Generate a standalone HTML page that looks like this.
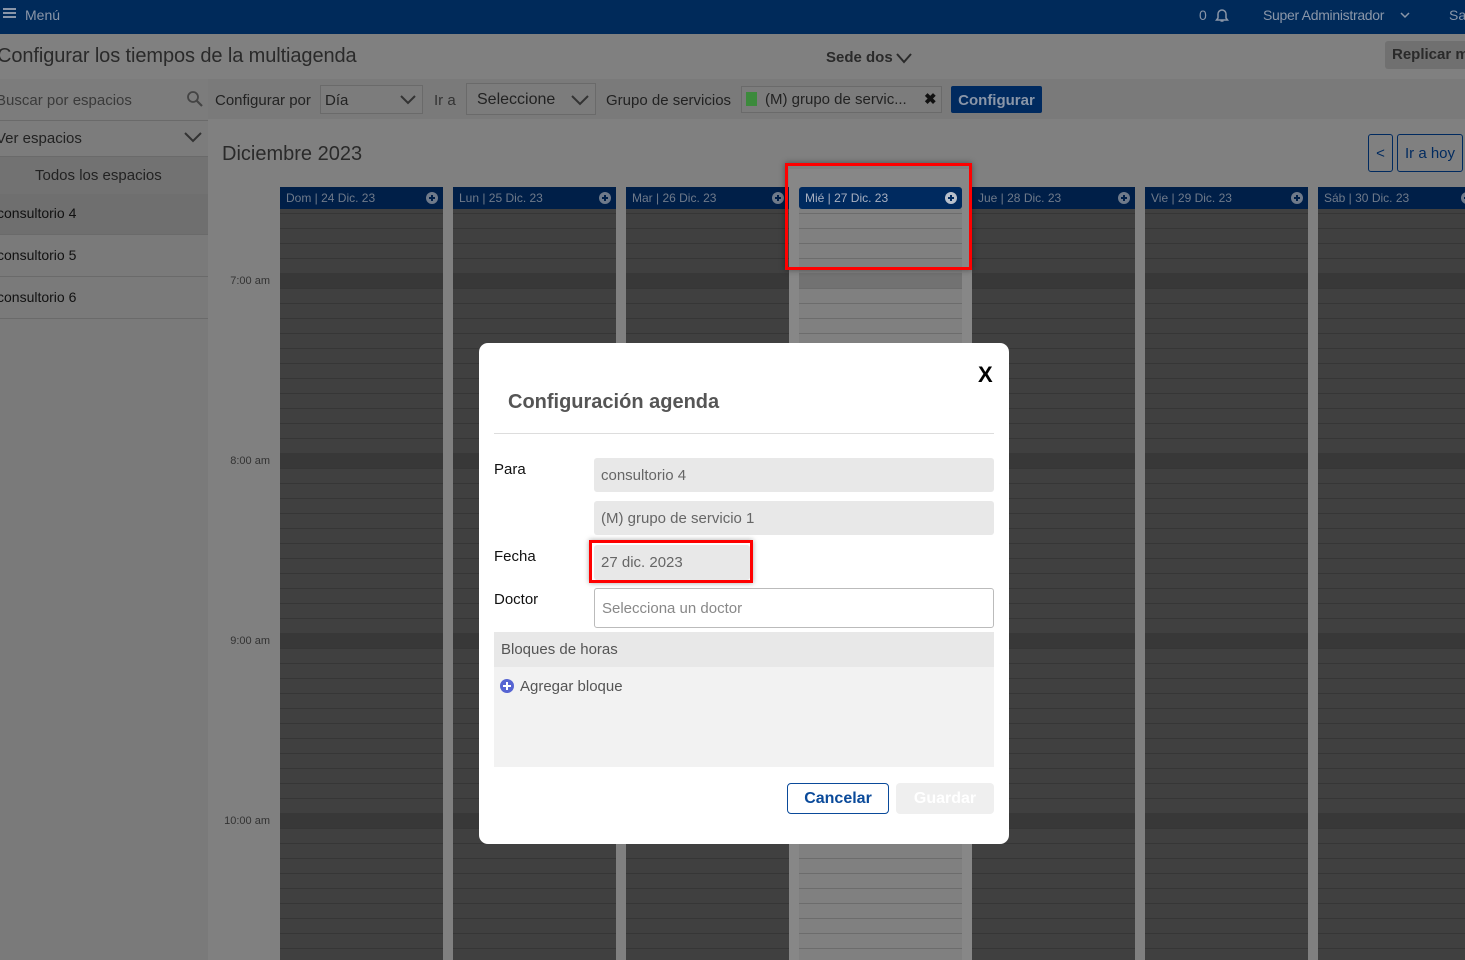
<!DOCTYPE html>
<html><head><meta charset="utf-8"><style>
*{box-sizing:border-box;margin:0;padding:0}
body{width:1465px;height:960px;overflow:hidden;background:#808080;font-family:"Liberation Sans",Arial,sans-serif;position:relative}
.a{position:absolute}
.top{left:0;top:0;width:1465px;height:34px;background:#002a5a;color:#8a96a8;font-size:14px}
.col{position:absolute;top:187px;width:163px;height:773px}
.col .h{height:22px;background:#001f48;color:#6f7a8a;font-size:12px;line-height:22px;padding-left:6px;position:relative}
.col .h i{position:absolute;right:5px;top:5px;width:12px;height:12px;border-radius:50%;background:#6f7a8a}
.col .h i:before{content:"";position:absolute;left:3px;top:5px;width:6px;height:2px;background:#001f48}
.col .h i:after{content:"";position:absolute;left:5px;top:3px;width:2px;height:6px;background:#001f48}
.col .b{height:751px;background:
repeating-linear-gradient(to bottom,transparent 0 64px,#383838 64px 79px,transparent 79px 180px),
repeating-linear-gradient(to bottom,transparent 0 4px,#363636 4px 5px,transparent 5px 15px),#404040}
.w .h{background:#002a5f;color:#a8b0c0;border-radius:3px}
.w .h i{background:#b8c0cc}.w .h i:before,.w .h i:after{background:#002a5f}
.w .b{background:
repeating-linear-gradient(to bottom,transparent 0 64px,#727272 64px 79px,transparent 79px 180px),
repeating-linear-gradient(to bottom,transparent 0 4px,#6c6c6c 4px 5px,transparent 5px 15px),#808080}
.tl{position:absolute;right:1195px;font-size:11px;color:#333}
.side{left:0;top:79px;width:208px;height:881px;background:#7a7a7a}
.item{position:absolute;left:0;width:208px;height:42px;border-bottom:1px solid #6a6a6a;font-size:14px;color:#111;line-height:40px;text-indent:-3px}
.modal{left:479px;top:343px;width:530px;height:501px;background:#fff;border-radius:9px}
.lbl{position:absolute;font-size:15px;color:#111}
.inp{position:absolute;left:115px;width:400px;height:34px;background:#e8e8e8;border-radius:3px;font-size:15px;color:#666;line-height:35px;padding-left:7px}
</style></head><body>
<div class="a top">
 <div class="a" style="left:3px;top:8px;width:13px;height:2px;background:#8a96a8;box-shadow:0 4px 0 #8a96a8,0 8px 0 #8a96a8"></div>
 <div class="a" style="left:25px;top:7px">Menú</div>
 <div class="a" style="left:1199px;top:7px">0</div>
 <svg class="a" style="left:1215px;top:7px" width="14" height="16" viewBox="0 0 14 16"><path d="M3 11V7a4 4 0 0 1 8 0v4l1.5 2h-11z M5.5 14h3" fill="none" stroke="#8a96a8" stroke-width="1.5"/></svg>
 <div class="a" style="left:1263px;top:7px;letter-spacing:-.3px">Super Administrador</div>
 <svg class="a" style="left:1400px;top:11px" width="10" height="8"><path d="M1 2l4 4 4-4" fill="none" stroke="#8a96a8" stroke-width="1.5"/></svg>
 <div class="a" style="left:1449px;top:7px">Sa</div>
</div>
<div class="a" style="left:-3px;top:45px;font-size:20px;color:#2a2a2a;letter-spacing:-.1px">Configurar los tiempos de la multiagenda</div>
<div class="a" style="left:826px;top:49px;font-size:15px;font-weight:bold;color:#2a2a2a">Sede dos</div>
<svg class="a" style="left:896px;top:52px" width="16" height="12"><path d="M1 2l7 8 7-8" fill="none" stroke="#2a2a2a" stroke-width="2"/></svg>
<div class="a" style="left:1385px;top:41px;width:90px;height:28px;background:#707070;border-radius:3px;font-size:15px;font-weight:bold;color:#2a2a2a;line-height:28px;padding-left:7px">Replicar m</div>
<div class="a" style="left:208px;top:79px;width:1257px;height:40px;background:#7a7a7a"></div>
<div class="a side"></div>
<div class="a" style="left:0;top:79px;width:208px;height:42px;border-bottom:1px solid #6a6a6a;background:#7c7c7c;font-size:15px;color:#3a3a3a;line-height:44px;text-indent:-4px">Buscar por espacios</div>
<svg class="a" style="left:186px;top:90px" width="18" height="18"><circle cx="7" cy="7" r="5" fill="none" stroke="#444" stroke-width="1.8"/><path d="M11 11l5 5" stroke="#444" stroke-width="2.2"/></svg>
<div class="a" style="left:0;top:121px;width:208px;height:36px;background:#7c7c7c;border-bottom:1px solid #6a6a6a;font-size:15px;color:#222;line-height:36px;text-indent:-4px">Ver espacios</div>
<svg class="a" style="left:184px;top:131px" width="18" height="12"><path d="M1 2l8 8 8-8" fill="none" stroke="#333" stroke-width="2"/></svg>
<div class="a" style="left:0;top:157px;width:208px;height:37px;background:#727272;font-size:15px;color:#222;line-height:38px;padding-left:35px">Todos los espacios</div>
<div class="item" style="top:194px;background:#6f6f6f;height:41px;line-height:38px">consultorio 4</div>
<div class="item" style="top:235px">consultorio 5</div>
<div class="item" style="top:277px">consultorio 6</div>
<div class="a" style="left:215px;top:92px;font-size:15px;color:#222">Configurar por</div>
<div class="a" style="left:320px;top:85px;width:103px;height:29px;background:#7c7c7c;border:1px solid #6a6a6a;font-size:15px;color:#222;line-height:29px;padding-left:4px">Día</div>
<svg class="a" style="left:400px;top:95px" width="16" height="11"><path d="M1 1l7 7 7-7" fill="none" stroke="#333" stroke-width="2"/></svg>
<div class="a" style="left:434px;top:92px;font-size:15px;color:#333">Ir a</div>
<div class="a" style="left:466px;top:83px;width:130px;height:32px;background:#7c7c7c;border:1px solid #6a6a6a;font-size:16px;color:#222;line-height:32px;padding-left:10px">Seleccione</div>
<svg class="a" style="left:571px;top:95px" width="18" height="11"><path d="M1 1l8 8 8-8" fill="none" stroke="#333" stroke-width="2"/></svg>
<div class="a" style="left:606px;top:92px;font-size:15px;color:#222">Grupo de servicios</div>
<div class="a" style="left:741px;top:86px;width:201px;height:27px;background:#7c7c7c;border:1px solid #6a6a6a"></div>
<div class="a" style="left:746px;top:92px;width:11px;height:14px;background:#3c8a3c"></div>
<div class="a" style="left:765px;top:91px;font-size:15px;color:#222">(M) grupo de servic...</div>
<div class="a" style="left:924px;top:90px;font-size:15px;font-weight:bold;color:#111">✖</div>
<div class="a" style="left:951px;top:86px;width:91px;height:27px;background:#002a5f;border-radius:2px;color:#8a96a8;font-weight:bold;font-size:15px;line-height:29px;text-align:center">Configurar</div>
<div class="a" style="left:222px;top:143px;font-size:20px;color:#2a2a2a">Diciembre 2023</div>
<div class="a" style="left:1368px;top:134px;width:25px;height:38px;border:1px solid #002a5f;border-radius:3px;color:#002a5f;font-size:15px;line-height:38px;text-align:center">&lt;</div>
<div class="a" style="left:1397px;top:134px;width:66px;height:38px;border:1px solid #002a5f;border-radius:3px;color:#002a5f;font-size:15px;line-height:38px;text-align:center">Ir a hoy</div>
<div class="tl" style="top:275px">7:00 am</div>
<div class="tl" style="top:455px">8:00 am</div>
<div class="tl" style="top:635px">9:00 am</div>
<div class="tl" style="top:815px">10:00 am</div>
<div class="col" style="left:280px"><div class="h">Dom | 24 Dic. 23<i></i></div><div class="b"></div></div>
<div class="col" style="left:453px"><div class="h">Lun | 25 Dic. 23<i></i></div><div class="b"></div></div>
<div class="col" style="left:626px"><div class="h">Mar | 26 Dic. 23<i></i></div><div class="b"></div></div>
<div class="a" style="left:789px;top:169px;width:183px;height:791px;background:#878787"></div>
<div class="col w" style="left:799px"><div class="h">Mié | 27 Dic. 23<i></i></div><div class="b"></div></div>
<div class="col" style="left:972px"><div class="h">Jue | 28 Dic. 23<i></i></div><div class="b"></div></div>
<div class="col" style="left:1145px"><div class="h">Vie | 29 Dic. 23<i></i></div><div class="b"></div></div>
<div class="col" style="left:1318px;width:160px"><div class="h">Sáb | 30 Dic. 23<i></i></div><div class="b"></div></div>
<div class="a" style="left:785px;top:163px;width:187px;height:107px;border:3px solid #ff0000;box-shadow:0 0 6px rgba(0,0,0,.4)"></div>
<div class="a modal">
 <div class="a" style="left:499px;top:19px;font-size:22px;font-weight:bold;color:#000">X</div>
 <div class="a" style="left:29px;top:48px;font-size:20px;font-weight:bold;color:#555">Configuración agenda</div>
 <div class="a" style="left:15px;top:90px;width:500px;height:1px;background:#ddd"></div>
 <div class="lbl" style="left:15px;top:118px">Para</div>
 <div class="inp" style="top:115px">consultorio 4</div>
 <div class="inp" style="top:158px">(M) grupo de servicio 1</div>
 <div class="lbl" style="left:15px;top:205px">Fecha</div>
 <div class="inp" style="top:202px;width:156px;height:35px;line-height:36px">27 dic. 2023</div>
 <div class="a" style="left:110px;top:197px;width:164px;height:43px;border:3px solid #ff0000;box-shadow:0 0 5px rgba(0,0,0,.35)"></div>
 <div class="lbl" style="left:15px;top:248px">Doctor</div>
 <div class="inp" style="top:245px;height:40px;background:#fff;border:1px solid #bbb;line-height:40px;color:#888">Selecciona un doctor</div>
 <div class="a" style="left:15px;top:289px;width:500px;height:35px;background:#e8e8e8;font-size:15px;color:#555;line-height:36px;padding-left:7px">Bloques de horas</div>
 <div class="a" style="left:15px;top:324px;width:500px;height:100px;background:#f2f2f2"></div>
 <div class="a" style="left:21px;top:336px;width:14px;height:14px;border-radius:50%;background:#5664d2"></div>
 <div class="a" style="left:24px;top:342px;width:8px;height:2px;background:#fff"></div>
 <div class="a" style="left:27px;top:339px;width:2px;height:8px;background:#fff"></div>
 <div class="a" style="left:41px;top:335px;font-size:15px;color:#555">Agregar bloque</div>
 <div class="a" style="left:308px;top:440px;width:102px;height:31px;border:1px solid #0a4a9a;border-radius:4px;color:#0a4a9a;font-weight:bold;font-size:16px;line-height:30px;text-align:center">Cancelar</div>
 <div class="a" style="left:417px;top:440px;width:98px;height:31px;background:#efefef;border-radius:4px;color:#fff;font-weight:bold;font-size:16px;line-height:31px;text-align:center">Guardar</div>
</div>
</body></html>
